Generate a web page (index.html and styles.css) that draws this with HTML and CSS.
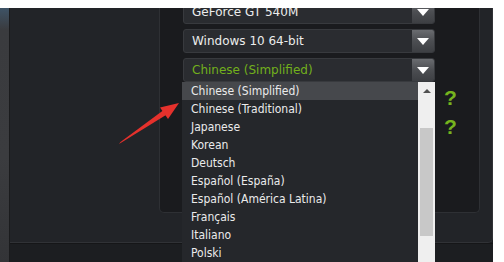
FILE: index.html
```html
<!DOCTYPE html>
<html>
<head>
<meta charset="utf-8">
<link rel="stylesheet" href="styles.css">
</head>
<body>
<div class="topstrip"></div>
<div class="screen">
  <div class="bgstrip"></div>
  <div class="window">
    <div class="main">
      <div class="side"></div>
      <div class="inner">
        <div class="rows">
          <div class="row">
            <div class="select"><span class="val">GeForce GT 540M</span><span class="btn"><i class="tri"></i></span></div>
          </div>
          <div class="row">
            <div class="select"><span class="val">Windows 10 64-bit</span><span class="btn"><i class="tri"></i></span></div>
          </div>
          <div class="row">
            <div class="select open"><span class="val green">Chinese (Simplified)</span><span class="btn"><i class="tri"></i></span>
              <div class="list">
                <div class="items">
                  <div class="item sel">Chinese (Simplified)</div>
                  <div class="item">Chinese (Traditional)</div>
                  <div class="item">Japanese</div>
                  <div class="item">Korean</div>
                  <div class="item">Deutsch</div>
                  <div class="item">Español (España)</div>
                  <div class="item">Español (América Latina)</div>
                  <div class="item">Français</div>
                  <div class="item">Italiano</div>
                  <div class="item">Polski</div>
                </div>
                <div class="scroll">
                  <div class="up"></div>
                  <div class="thumb"></div>
                </div>
              </div>
            </div>
          </div>
          <div class="row">
            <div class="select"><span class="val"></span><span class="btn"><i class="tri"></i></span></div>
            <span class="help">?</span>
          </div>
          <div class="row">
            <div class="select"><span class="val"></span><span class="btn"><i class="tri"></i></span></div>
            <span class="help">?</span>
          </div>
        </div>
      </div>
    </div>
    <div class="footer"></div>
  </div>
  <div class="rightstrip"></div>
</div>
<svg class="arrow" width="504" height="262" viewBox="0 0 504 262">
  <polygon points="119,144 120.5,142 163,110.5 166,115" fill="#e5312c"/>
  <polygon points="179,103 168,119 160,107.5" fill="#e5312c"/>
</svg>
</body>
</html>
```
FILE: styles.css
```css
* { box-sizing: border-box; }
html, body { margin: 0; padding: 0; }
body {
  width: 504px;
  height: 262px;
  overflow: hidden;
  background: #ffffff;
  font-family: "DejaVu Sans", sans-serif;
  position: relative;
}
.topstrip {
  position: absolute;
  left: 0;
  top: 0;
  width: 504px;
  height: 8px;
  background: #ffffff;
  z-index: 20;
}
.screen {
  display: flex;
  height: 262px;
}
.bgstrip {
  width: 10px;
  background: linear-gradient(180deg, #3e5366 0px, #3e5366 8px, #3a3b3e 30px, #3b3c3f 60%, #333437 100%);
  border-right: 1px solid #1a1b1d;
}
.window {
  width: 483px;
  display: flex;
  flex-direction: column;
  background: #1c1e21;
}
.main {
  height: 243px;
  display: flex;
  background: #222428;
  border-right: 1px solid #303236;
  border-bottom: 1px solid #303236;
  border-bottom-right-radius: 5px;
}
.side { width: 149px; flex: none; }
.inner {
  width: 321px;
  height: 213px;
  background: #1a1b1e;
  border: 1px solid #2e3034;
  border-top: none;
  border-radius: 0 0 5px 5px;
}
.rows {
  display: flex;
  flex-direction: column;
  gap: 5px;
  padding-left: 23px;
  padding-top: 0;
}
.row {
  display: flex;
  align-items: center;
  height: 24px;
}
.select {
  position: relative;
  width: 252px;
  height: 24px;
  display: flex;
  align-items: center;
  background: #2a2c30;
  border: 1px solid #383a3e;
  border-radius: 3px;
}
.val {
  flex: 1;
  padding-left: 8px;
  color: #ececec;
  font-size: 12px;
  white-space: nowrap;
}
.val.green { color: #72b01c; }
.btn {
  width: 22px;
  height: 22px;
  display: flex;
  align-items: center;
  justify-content: center;
  background: linear-gradient(180deg, #6a6c70 0%, #4c4e52 50%, #3d3f43 100%);
  border-radius: 0 2px 2px 0;
}
.tri {
  width: 0;
  height: 0;
  border-left: 6px solid transparent;
  border-right: 6px solid transparent;
  border-top: 7px solid #ffffff;
}
.help {
  margin-left: 9px;
  margin-top: -2px;
  color: #76b41e;
  font-family: "Liberation Sans", sans-serif;
  font-weight: bold;
  font-size: 21px;
}
.list {
  position: absolute;
  left: -2px;
  top: 23px;
  width: 253px;
  height: 182px;
  display: flex;
  background: #25272b;
  z-index: 5;
}
.items { flex: 1; }
.item {
  height: 18px;
  line-height: 18px;
  padding-left: 9px;
  color: #ebebeb;
  font-family: "DejaVu Sans Condensed", "DejaVu Sans", sans-serif;
  font-stretch: condensed;
  font-size: 12px;
  white-space: nowrap;
}
.item.sel { background: #46484c; }
.scroll {
  width: 17px;
  background: #efefef;
  display: flex;
  flex-direction: column;
  align-items: center;
}
.up {
  margin-top: 7px;
  width: 0;
  height: 0;
  border-left: 4px solid transparent;
  border-right: 4px solid transparent;
  border-bottom: 4px solid #505050;
}
.thumb {
  margin-top: 35px;
  width: 13px;
  height: 108px;
  background: #c8c8c8;
}
.footer {
  flex: 1;
  background: #1c1e21;
  border-top: 1px solid #151618;
}
.rightstrip { flex: 1; background: #ffffff; }
.arrow {
  position: absolute;
  left: 0;
  top: 0;
  pointer-events: none;
  z-index: 10;
}
```
